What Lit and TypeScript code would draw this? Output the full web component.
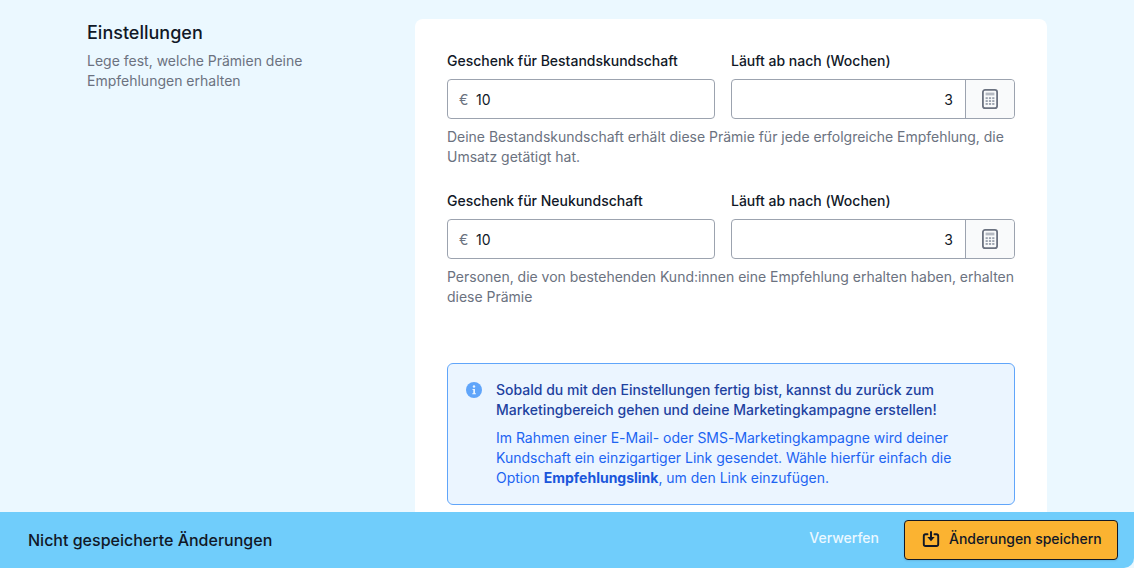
import { LitElement, html, css, svg } from "lit";
import { customElement } from "lit/decorators.js";

const calc = svg`<svg class="calc" width="20" height="20" viewBox="0 0 20 20" fill="none" aria-hidden="true">
  <rect x="2.9" y="0.9" width="14.2" height="18.2" rx="2.2" stroke="#6b7280" stroke-width="1.8"/>
  <rect x="5.6" y="3.6" width="8.8" height="2.8" fill="#b4b9c2"/>
  <g fill="#9ca3af"><rect x="5.6" y="8.2" width="2.2" height="1.9"/><rect x="8.9" y="8.2" width="2.2" height="1.9"/><rect x="12.2" y="8.2" width="2.2" height="1.9"/>
  <rect x="5.6" y="11.1" width="2.2" height="1.9"/><rect x="8.9" y="11.1" width="2.2" height="1.9"/><rect x="12.2" y="11.1" width="2.2" height="1.9"/>
  <rect x="5.6" y="14" width="2.2" height="1.9"/><rect x="8.9" y="14" width="2.2" height="1.9"/><rect x="12.2" y="14" width="2.2" height="1.9"/></g>
</svg>`;

const info = svg`<svg class="info" width="16" height="16" viewBox="0 0 16 16" aria-hidden="true">
  <circle cx="8" cy="8" r="8" fill="#60a5fa"/>
  <circle cx="8" cy="4.5" r="1.2" fill="#ebf5ff"/>
  <path d="M6.5 7h2.5v4.2h.9v1.1H6.3v-1.1h1V8.1H6.5z" fill="#ebf5ff"/>
</svg>`;

const save = svg`<svg width="20" height="20" viewBox="0 0 20 20" fill="none" aria-hidden="true">
  <path d="M6.5 5.2H4.6A1.8 1.8 0 0 0 2.8 7v8.2A1.8 1.8 0 0 0 4.6 17h10.8a1.8 1.8 0 0 0 1.8-1.8V7a1.8 1.8 0 0 0-1.8-1.8h-1.9" stroke="#111827" stroke-width="1.9" stroke-linecap="round"/>
  <path d="M9 2.2h2v5.9h2.7L10 12.3 6.3 8.1H9z" fill="#111827"/>
</svg>`;

@customElement("app-root")
export class AppRoot extends LitElement {
  static styles = css`
    :host {
      display: block;
      height: 568px;
      overflow: hidden;
      position: relative;
      background: #ebf8ff;
      font-family: Inter, "Liberation Sans", sans-serif;
      font-size: 14px;
      line-height: 20px;
      color: #111827;
    }
    .page {
      display: grid;
      grid-template-columns: 296px 632px;
      gap: 32px;
      padding: 19px 87px 0;
    }
    .intro h2 {
      margin: 0;
      font-size: 18px;
      line-height: 28px;
      font-weight: 500;
      color: #111827;
    }
    .intro p {
      margin: 4px 0 0;
      color: #6b7280;
      width: 240px;
    }
    .card {
      background: #fff;
      border-radius: 8px;
      padding: 32px;
      height: 700px;
      box-sizing: border-box;
    }
    .row {
      display: grid;
      grid-template-columns: 268px 284px;
      gap: 16px;
    }
    label {
      display: block;
      font-weight: 500;
      margin-bottom: 8px;
      color: #111827;
      letter-spacing: -0.01px;
    }
    .field {
      display: flex;
      height: 40px;
      box-sizing: border-box;
      border: 1px solid #9ca3af;
      border-radius: 4px;
      background: #fff;
      align-items: center;
    }
    .euro {
      color: #6b7280;
      margin-left: 11px;
      width: 17px;
      padding-top: 2px;
    }
    .value {
      flex: 1;
      padding-top: 2px;
    }
    .value.right {
      text-align: right;
      padding-right: 12px;
    }
    .addon {
      width: 48px;
      height: 100%;
      border-left: 1px solid #9ca3af;
      background: #f9fafb;
      border-radius: 0 4px 4px 0;
      display: flex;
      align-items: center;
      justify-content: center;
    }
    .help {
      margin: 8px 0 24px;
      color: #6b7280;
      letter-spacing: -0.015px;
    }
    .help.last {
      margin-bottom: 56px;
    }
    .note {
      display: flex;
      gap: 14px;
      border: 1px solid #60a5fa;
      border-radius: 6px;
      background: #ebf5ff;
      padding: 16px 16px 16px 18px;
    }
    .info {
      flex: none;
      margin-top: 2px;
    }
    .note h3 {
      margin: 0 0 8px;
      font-size: 14px;
      line-height: 20px;
      font-weight: 500;
      color: #1e429f;
    }
    .note p {
      margin: 0;
      color: #1c64f2;
      letter-spacing: -0.012px;
    }
    .note b {
      font-weight: 700;
      color: #1a56db;
    }
    .bar {
      position: absolute;
      left: 0;
      right: 0;
      bottom: 0;
      height: 56px;
      box-sizing: border-box;
      background: #70cdfb;
      border-radius: 0 0 10px 0;
      display: flex;
      align-items: center;
      padding: 0 16px 0 28px;
    }
    .bar .msg {
      flex: 1;
      font-size: 16px;
      line-height: 24px;
      font-weight: 500;
      color: #111827;
    }
    .discard {
      color: #ebf8ff;
      font-weight: 500;
      margin-right: 25px;
      margin-top: -4px;
    }
    .save {
      display: flex;
      align-items: center;
      gap: 8px;
      height: 40px;
      width: 214px;
      box-sizing: border-box;
      padding: 0 0 2px 16px;
      background: #fbb331;
      border: 1px solid #111827;
      border-radius: 4px;
      font-weight: 500;
      color: #111827;
      letter-spacing: -0.03px;
      box-shadow: 0 1px 2px rgba(0, 0, 0, 0.1);
    }
  `;

  private fieldRow(label: string) {
    return html`<div class="row">
      <div>
        <label>${label}</label>
        <div class="field"><span class="euro">€</span><span class="value">10</span></div>
      </div>
      <div>
        <label>Läuft ab nach (Wochen)</label>
        <div class="field"><span class="value right">3</span><span class="addon">${calc}</span></div>
      </div>
    </div>`;
  }

  render() {
    return html`
      <div class="page">
        <section class="intro">
          <h2>Einstellungen</h2>
          <p>Lege fest, welche Prämien deine Empfehlungen erhalten</p>
        </section>
        <section class="card">
          ${this.fieldRow("Geschenk für Bestandskundschaft")}
          <p class="help">Deine Bestandskundschaft erhält diese Prämie für jede erfolgreiche Empfehlung, die Umsatz getätigt hat.</p>
          ${this.fieldRow("Geschenk für Neukundschaft")}
          <p class="help last">Personen, die von bestehenden Kund:innen eine Empfehlung erhalten haben, erhalten diese Prämie</p>
          <div class="note">
            ${info}
            <div>
              <h3>Sobald du mit den Einstellungen fertig bist, kannst du zurück zum Marketingbereich gehen und deine Marketingkampagne erstellen!</h3>
              <p>Im Rahmen einer E-Mail- oder SMS-Marketingkampagne wird deiner Kundschaft ein einzigartiger Link gesendet. Wähle hierfür einfach die Option <b>Empfehlungslink</b>, um den Link einzufügen.</p>
            </div>
          </div>
        </section>
      </div>
      <div class="bar">
        <span class="msg">Nicht gespeicherte Änderungen</span>
        <span class="discard">Verwerfen</span>
        <span class="save">${save}Änderungen speichern</span>
      </div>
    `;
  }
}
